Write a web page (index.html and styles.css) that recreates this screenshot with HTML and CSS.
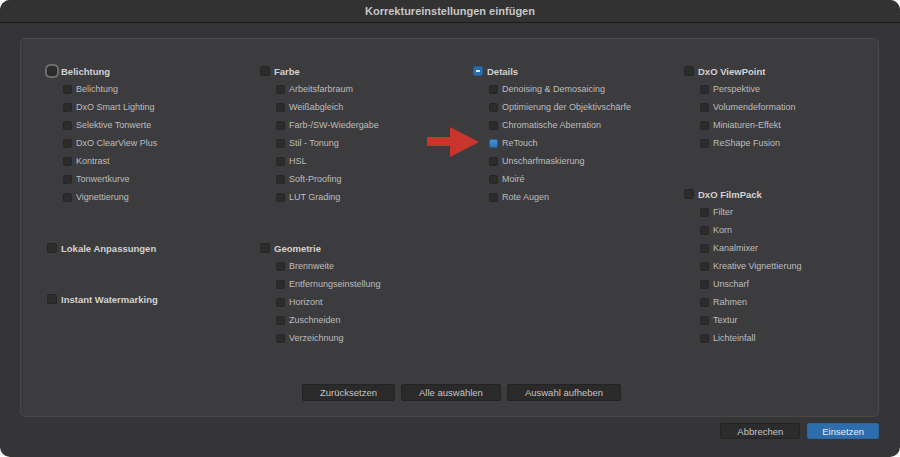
FILE: index.html
```html
<!DOCTYPE html>
<html lang="de">
<head>
    <meta charset="UTF-8">
    <title>Korrektureinstellungen einfügen</title>
    <link rel="stylesheet" href="styles.css">
</head>
<body>
    <div class="window">
        <div class="titlebar">Korrektureinstellungen einfügen</div>

        <div class="content">
            <div class="panel">
                <div class="columns">
                    <!-- Spalte 1 -->
                    <div class="col">
                        <div class="group">
                            <div class="row parent"><span class="cb focus"></span>Belichtung</div>
                            <div class="children">
                                <div class="row"><span class="cb"></span>Belichtung</div>
                                <div class="row"><span class="cb"></span>DxO Smart Lighting</div>
                                <div class="row"><span class="cb"></span>Selektive Tonwerte</div>
                                <div class="row"><span class="cb"></span>DxO ClearView Plus</div>
                                <div class="row"><span class="cb"></span>Kontrast</div>
                                <div class="row"><span class="cb"></span>Tonwertkurve</div>
                                <div class="row"><span class="cb"></span>Vignettierung</div>
                            </div>
                        </div>
                        <div class="group">
                            <div class="row parent"><span class="cb"></span>Lokale Anpassungen</div>
                        </div>
                        <div class="group">
                            <div class="row parent"><span class="cb"></span>Instant Watermarking</div>
                        </div>
                    </div>

                    <!-- Spalte 2 -->
                    <div class="col">
                        <div class="group">
                            <div class="row parent"><span class="cb"></span>Farbe</div>
                            <div class="children">
                                <div class="row"><span class="cb"></span>Arbeitsfarbraum</div>
                                <div class="row"><span class="cb"></span>Weißabgleich</div>
                                <div class="row"><span class="cb"></span>Farb-/SW-Wiedergabe</div>
                                <div class="row"><span class="cb"></span>Stil - Tonung</div>
                                <div class="row"><span class="cb"></span>HSL</div>
                                <div class="row"><span class="cb"></span>Soft-Proofing</div>
                                <div class="row"><span class="cb"></span>LUT Grading</div>
                            </div>
                        </div>
                        <div class="group">
                            <div class="row parent"><span class="cb"></span>Geometrie</div>
                            <div class="children">
                                <div class="row"><span class="cb"></span>Brennweite</div>
                                <div class="row"><span class="cb"></span>Entfernungseinstellung</div>
                                <div class="row"><span class="cb"></span>Horizont</div>
                                <div class="row"><span class="cb"></span>Zuschneiden</div>
                                <div class="row"><span class="cb"></span>Verzeichnung</div>
                            </div>
                        </div>
                    </div>

                    <!-- Spalte 3 -->
                    <div class="col">
                        <div class="group">
                            <div class="row parent"><span class="cb mixed"></span>Details</div>
                            <div class="children">
                                <div class="row"><span class="cb"></span>Denoising &amp; Demosaicing</div>
                                <div class="row"><span class="cb"></span>Optimierung der Objektivschärfe</div>
                                <div class="row"><span class="cb"></span>Chromatische Aberration</div>
                                <div class="row"><span class="cb checked"></span>ReTouch</div>
                                <div class="row"><span class="cb"></span>Unscharfmaskierung</div>
                                <div class="row"><span class="cb"></span>Moiré</div>
                                <div class="row"><span class="cb"></span>Rote Augen</div>
                            </div>
                        </div>
                    </div>

                    <!-- Spalte 4 -->
                    <div class="col">
                        <div class="group">
                            <div class="row parent"><span class="cb"></span>DxO ViewPoint</div>
                            <div class="children">
                                <div class="row"><span class="cb"></span>Perspektive</div>
                                <div class="row"><span class="cb"></span>Volumendeformation</div>
                                <div class="row"><span class="cb"></span>Miniaturen-Effekt</div>
                                <div class="row"><span class="cb"></span>ReShape Fusion</div>
                            </div>
                        </div>
                        <div class="group">
                            <div class="row parent"><span class="cb"></span>DxO FilmPack</div>
                            <div class="children">
                                <div class="row"><span class="cb"></span>Filter</div>
                                <div class="row"><span class="cb"></span>Korn</div>
                                <div class="row"><span class="cb"></span>Kanalmixer</div>
                                <div class="row"><span class="cb"></span>Kreative Vignettierung</div>
                                <div class="row"><span class="cb"></span>Unscharf</div>
                                <div class="row"><span class="cb"></span>Rahmen</div>
                                <div class="row"><span class="cb"></span>Textur</div>
                                <div class="row"><span class="cb"></span>Lichteinfall</div>
                            </div>
                        </div>
                    </div>
                </div>

                <div class="actions">
                    <button class="btn">Zurücksetzen</button>
                    <button class="btn">Alle auswählen</button>
                    <button class="btn">Auswahl aufheben</button>
                </div>
            </div>

            <div class="footer">
                <button class="btn cancel">Abbrechen</button>
                <button class="btn primary">Einsetzen</button>
            </div>
        </div>

        <!-- roter Pfeil auf ReTouch -->
        <svg class="arrow" width="53" height="31" viewBox="0 0 53 31">
            <polygon points="0,10 23,10 23,0 52,15 23,30 23,19 0,19" fill="#c9352b"/>
        </svg>
    </div>
</body>
</html>
```

FILE: styles.css
```css
html, body {
    margin: 0;
    padding: 0;
    background-color: #ffffff;
}

body {
    font-family: "Liberation Sans", Arial, sans-serif;
    font-size: 9px;
    color: #bcbcbc;
}

.window {
    position: relative;
    width: 900px;
    height: 457px;
    background-color: #353537;
    border-radius: 10px;
    overflow: hidden;
}

.titlebar {
    height: 22px;
    line-height: 23px;
    background-color: #323233;
    border-bottom: 1px solid #1b1b1c;
    text-align: center;
    font-size: 11px;
    font-weight: bold;
    color: #c6c6c6;
}

.content {
    padding: 15px 21px 0 20px;
}

.panel {
    height: 377px;
    background-color: #3c3c3e;
    border: 1px solid #484849;
    border-radius: 5px;
    display: flex;
    flex-direction: column;
}

.columns {
    flex: 1;
    display: grid;
    grid-template-columns: 213px 213px 211px 1fr;
    padding: 23px 0 0 26px;
}

.group {
    margin-bottom: 33px;
}

.row {
    height: 18px;
    display: flex;
    align-items: center;
    gap: 4px;
    white-space: nowrap;
}

.row.parent {
    gap: 4px;
    font-weight: bold;
    font-size: 9.5px;
    color: #d2d2d2;
}

.children {
    padding-left: 16px;
}

.cb {
    flex: none;
    width: 9px;
    height: 9px;
    background-color: #2c2c2d;
    border: 1px solid #262627;
    border-radius: 2px;
    box-sizing: border-box;
}

.row.parent .cb {
    width: 10px;
    height: 10px;
}

.cb.focus {
    box-shadow: 0 0 0 2px #6c6c6d;
    border-radius: 3px;
}

.cb.mixed {
    position: relative;
    background-color: #2b6cae;
    border-color: #245e99;
}

.cb.mixed::after {
    content: "";
    position: absolute;
    left: 2px;
    right: 2px;
    top: 3px;
    height: 2px;
    background-color: #d6e4f2;
}

.cb.checked {
    background: linear-gradient(#4a8fd4, #2f72b6);
    border-color: #255f9a;
}

.actions {
    display: flex;
    justify-content: center;
    gap: 6px;
    padding: 0 0 15px 24px;
}

.btn {
    margin: 0;
    height: 17px;
    padding: 0 17px;
    font-family: "Liberation Sans", Arial, sans-serif;
    font-size: 9.5px;
    color: #c4c4c4;
    background-color: #2a2a2b;
    border: 1px solid #232324;
    border-radius: 2px;
    cursor: pointer;
}

.footer {
    display: flex;
    justify-content: flex-end;
    gap: 7px;
    margin-top: 6px;
}

.footer .btn {
    height: 16px;
    padding: 0 16px;
}

.btn.cancel {
    background-color: #2c2c2d;
}

.btn.primary {
    background-color: #2e6dab;
    border-color: #2a65a0;
    color: #e6eef7;
    padding: 0 14px;
}

.arrow {
    position: absolute;
    left: 427px;
    top: 127px;
}
```
